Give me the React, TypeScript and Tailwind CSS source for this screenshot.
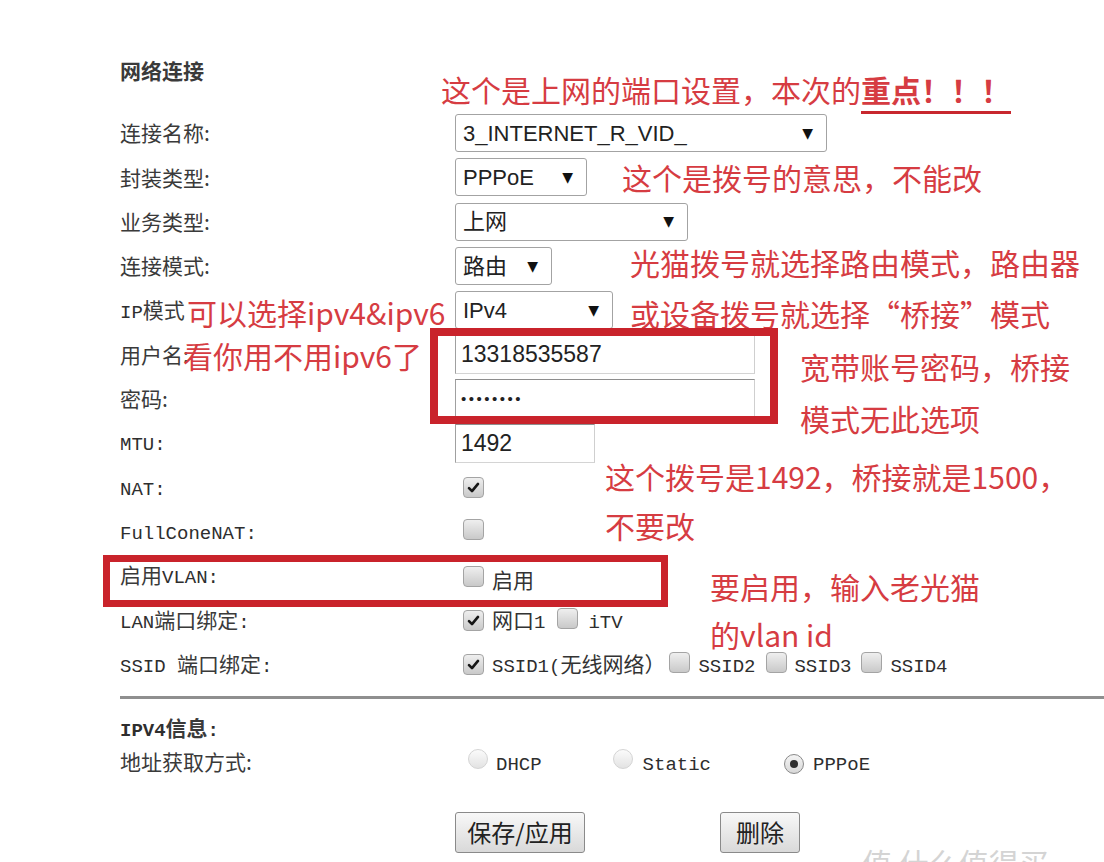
import React from 'react';

const cjk = "font-['Noto_Sans_CJK_SC',sans-serif]";

function M({ children }: { children: React.ReactNode }) {
  return <span className="font-['Liberation_Mono','Noto_Sans_CJK_SC',monospace] text-[19px] text-[#2e2e2e]">{children}</span>;
}

function Box({ checked }: { checked?: boolean }) {
  return (
    <span className="inline-flex h-[21px] w-[21px] shrink-0 items-center justify-center rounded-[4px] border border-[#a4a4a4] bg-linear-to-b from-[#efefef] to-[#c9c9c9]">
      {checked && (
        <svg viewBox="0 0 16 16" className="h-[15px] w-[15px]">
          <path d="M3.2 8.6 L6.4 11.8 L12.8 4.2" fill="none" stroke="#161616" strokeWidth="2.8" strokeLinecap="round" strokeLinejoin="round" />
        </svg>
      )}
    </span>
  );
}

function Radio({ on }: { on?: boolean }) {
  return (
    <span
      className={
        on
          ? 'inline-flex h-[20px] w-[20px] shrink-0 items-center justify-center rounded-full border border-[#8a8a8a] bg-linear-to-b from-[#f4f4f4] to-[#d8d8d8]'
          : 'inline-flex h-[20px] w-[20px] shrink-0 items-center justify-center rounded-full border border-[#d4d4d4] bg-linear-to-b from-[#fbfbfb] to-[#e3e3e3]'
      }
    >
      {on && <span className="h-[8px] w-[8px] rounded-full bg-[#2e2e2e]" />}
    </span>
  );
}

function Select({ value, w }: { value: string; w: string }) {
  return (
    <div className={`flex h-[38px] items-center justify-between rounded-[3px] border border-[#a3a3a3] bg-white pl-[7px] pr-[13px] ${w}`}>
      <span className="font-['Liberation_Sans','Noto_Sans_CJK_SC',sans-serif] text-[22px] text-[#222]">{value}</span>
      <span className="font-['DejaVu_Sans',sans-serif] text-[14px] text-[#111]">▼</span>
    </div>
  );
}

function Input({ children, w }: { children: React.ReactNode; w: string }) {
  return (
    <div className={`flex h-[39px] items-center border border-t-[#8e8e8e] border-l-[#a0a0a0] border-r-[#cfcfcf] border-b-[#d4d4d4] bg-white pl-[5px] font-['Liberation_Sans',sans-serif] text-[23px] text-[#222] ${w}`}>
      {children}
    </div>
  );
}

function Row({ label, children }: { label: React.ReactNode; children?: React.ReactNode }) {
  return (
    <div className="flex h-[44.3px] items-center">
      <div className="w-[335px] text-[21px] text-[#3a3a3a]">{label}</div>
      <div className="flex items-center">{children}</div>
    </div>
  );
}

const red = "absolute whitespace-nowrap text-[30px] leading-[30px] text-[#d63c42]";

export default function App() {
  return (
    <div className={`relative h-[862px] w-[1104px] overflow-hidden bg-white ${cjk}`}>
      <div className="pl-[120px] pt-[55px]">
        <h2 className="h-[30px] text-[21px] font-bold leading-[30px] text-[#3a3a3a]">网络连接</h2>

        <div className="mt-[26px]">
          <Row label="连接名称:">
            <Select value="3_INTERNET_R_VID_" w="w-[372px]" />
          </Row>
          <Row label="封装类型:">
            <Select value="PPPoE" w="w-[132px]" />
          </Row>
          <Row label="业务类型:">
            <Select value="上网" w="w-[233px]" />
          </Row>
          <Row label="连接模式:">
            <Select value="路由" w="w-[97px]" />
          </Row>
          <Row label={<><M>IP</M>模式</>}>
            <Select value="IPv4" w="w-[158px]" />
          </Row>
          <Row label="用户名:">
            <Input w="w-[300px]">13318535587</Input>
          </Row>
          <Row label="密码:">
            <Input w="w-[300px]">
              <span className="text-[15px] tracking-[2.5px]">••••••••</span>
            </Input>
          </Row>
          <Row label={<M>MTU:</M>}>
            <Input w="w-[140px]">1492</Input>
          </Row>
          <Row label={<M>NAT:</M>}>
            <span className="ml-[8px]"><Box checked /></span>
          </Row>
          <Row label={<M>FullConeNAT:</M>}>
            <span className="ml-[8px]"><Box /></span>
          </Row>
          <Row label={<>启用<M>VLAN:</M></>}>
            <span className="ml-[8px] flex items-center gap-[8px] text-[21px] text-[#333]">
              <Box />
              <span className="mt-[8px]">启用</span>
            </span>
          </Row>
          <Row label={<><M>LAN</M>端口绑定<M>:</M></>}>
            <span className="ml-[8px] flex items-center text-[21px] text-[#333]">
              <Box checked />
              <span className="ml-[8px]">网口<M>1</M></span>
              <span className="ml-[12px]"><Box /></span>
              <span className="ml-[10px]"><M>iTV</M></span>
            </span>
          </Row>
          <Row label={<><M>SSID </M>端口绑定<M>:</M></>}>
            <span className="ml-[8px] flex items-center text-[21px] text-[#333]">
              <Box checked />
              <span className="ml-[8px]"><M>SSID1(</M>无线网络）</span>
              <span className="ml-[4px]"><Box /></span>
              <span className="ml-[8px]"><M>SSID2</M></span>
              <span className="ml-[11px]"><Box /></span>
              <span className="ml-[7px]"><M>SSID3</M></span>
              <span className="ml-[10px]"><Box /></span>
              <span className="ml-[8px]"><M>SSID4</M></span>
            </span>
          </Row>
        </div>

        <div className="mt-[9px] h-[3px] w-full bg-[#8f8f8f]" />

        <div className="mt-[13px] h-[30px] text-[21px] font-bold leading-[30px] text-[#3a3a3a]">
          <M>IPV4</M>信息<M>:</M>
        </div>
        <div className="mt-[2px] flex h-[36px] items-center">
          <div className="w-[335px] text-[21px] text-[#3a3a3a]">地址获取方式:</div>
          <div className="flex items-center text-[#333]">
            <span className="ml-[13px]"><Radio /></span>
            <span className="ml-[8px] mt-[7px]"><M>DHCP</M></span>
            <span className="ml-[71px]"><Radio /></span>
            <span className="ml-[10px] mt-[7px]"><M>Static</M></span>
            <span className="ml-[73px]"><Radio on /></span>
            <span className="ml-[9px] mt-[7px]"><M>PPPoE</M></span>
          </div>
        </div>

        <div className="mt-[32px] flex pl-[335px]">
          <button className="h-[41px] w-[130px] rounded-[3px] border border-[#8a8a8a] bg-linear-to-b from-[#f8f8f8] to-[#d9d9d9] text-[24px] leading-none text-[#222]">
            保存/应用
          </button>
          <button className="ml-[135px] h-[41px] w-[80px] rounded-[3px] border border-[#8a8a8a] bg-linear-to-b from-[#f8f8f8] to-[#d9d9d9] text-[24px] leading-none text-[#222]">
            删除
          </button>
        </div>
      </div>

      {/* annotations */}
      <div className={`${red} left-[441px] top-[74px]`}>
        这个是上网的端口设置，本次的
        <span className="border-b-[3px] border-[#c8272e] font-bold">重点！！！</span>
      </div>
      <div className={`${red} left-[622px] top-[162px]`}>这个是拨号的意思，不能改</div>
      <div className={`${red} left-[630px] top-[247px]`}>光猫拨号就选择路由模式，路由器</div>
      <div className={`${red} left-[630px] top-[298px]`}>
        或设备拨号就选择<span className="inline-block w-[30px] text-right">“</span>桥接
        <span className="inline-block w-[30px] text-left">”</span>模式
      </div>
      <div className={`${red} left-[187px] top-[297px]`}>可以选择ipv4&amp;ipv6</div>
      <div className={`${red} left-[183px] top-[340px]`}>看你用不用ipv6了</div>
      <div className={`${red} left-[800px] top-[351px]`}>宽带账号密码，桥接</div>
      <div className={`${red} left-[800px] top-[403px]`}>模式无此选项</div>
      <div className={`${red} left-[605px] top-[461px]`}>这个拨号是1492，桥接就是1500，</div>
      <div className={`${red} left-[605px] top-[510px]`}>不要改</div>
      <div className={`${red} left-[710px] top-[571px]`}>要启用，输入老光猫</div>
      <div className={`${red} left-[710px] top-[619px]`}>的vlan id</div>

      {/* red highlight boxes */}
      <div className="absolute left-[430px] top-[328px] h-[96px] w-[348px] border-[8px] border-[#c9232b]" />
      <div className="absolute left-[103px] top-[555px] h-[52px] w-[565px] border-[7px] border-[#c9232b]" />

      <div className="absolute left-[862px] top-[847px] whitespace-nowrap text-[30px] leading-[30px] text-[#d4d4d4]">值 什么值得买</div>
    </div>
  );
}
